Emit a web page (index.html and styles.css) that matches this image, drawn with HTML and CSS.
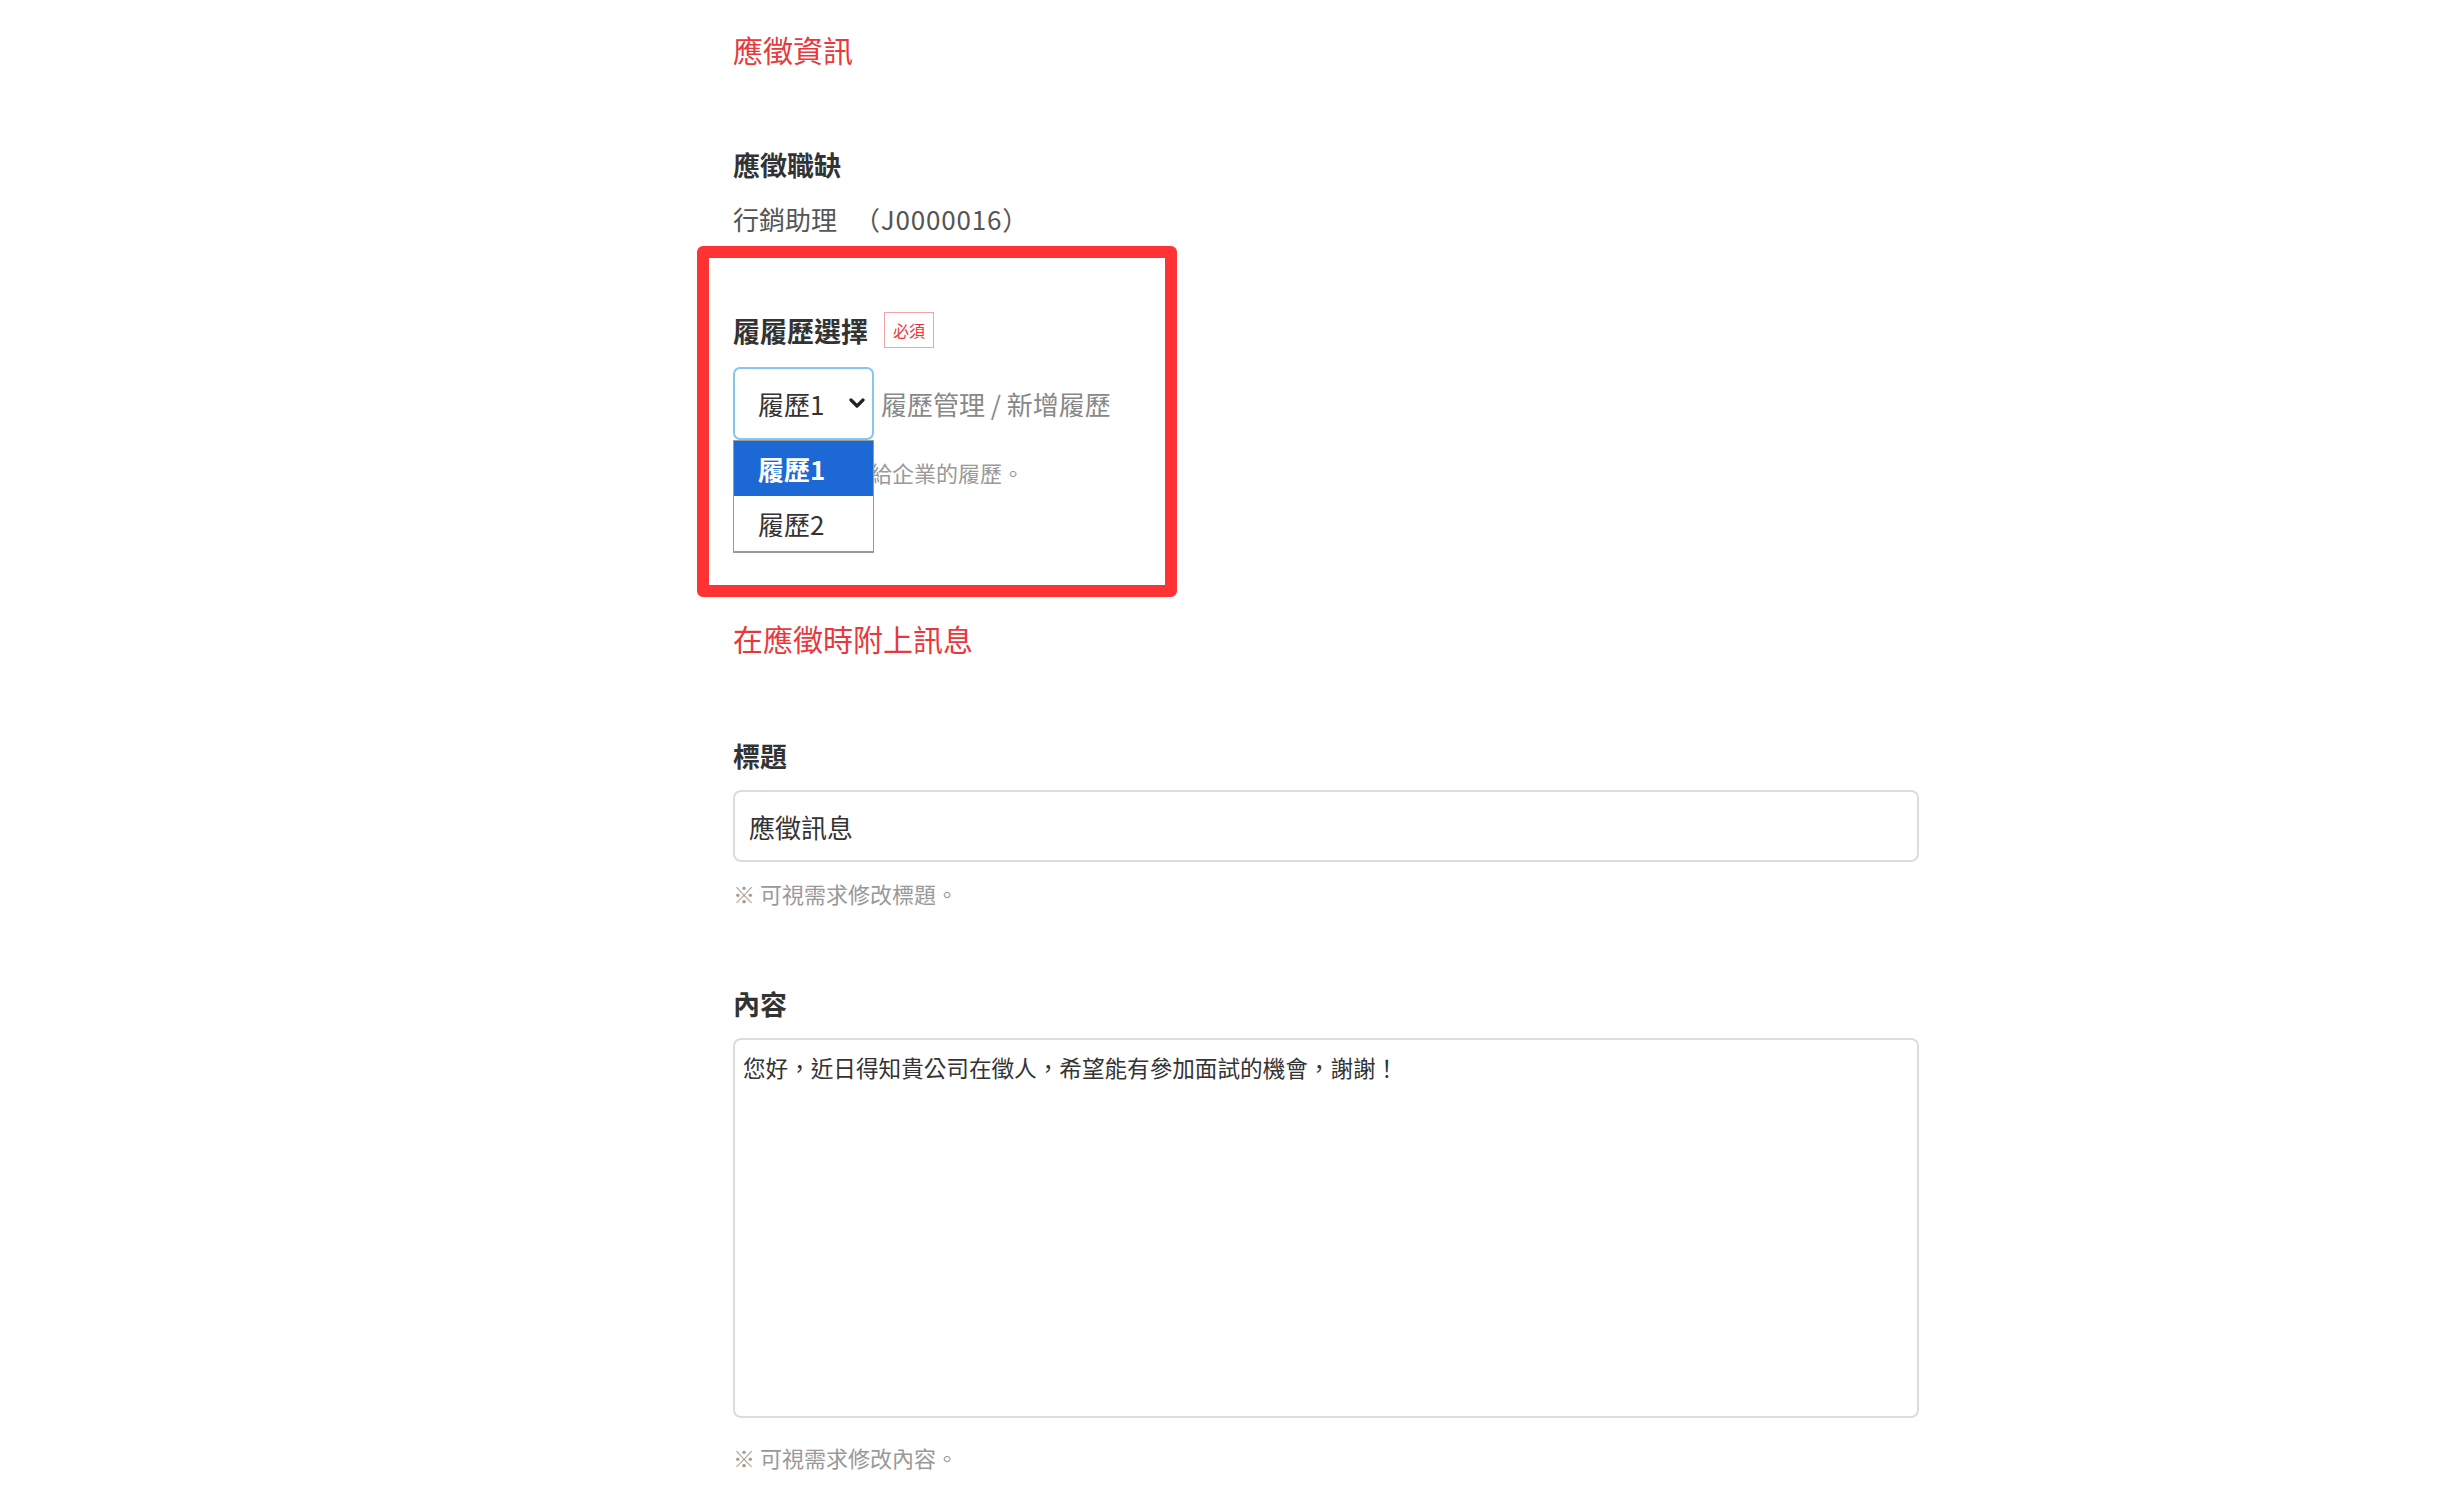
FILE: index.html
```html
<!DOCTYPE html>
<html lang="zh-Hant">
<head>
  <meta charset="UTF-8" />
  <meta name="viewport" content="width=device-width, initial-scale=1.0" />
  <title>應徵資訊</title>
  <link rel="stylesheet" href="styles.css">
</head>
<body>
  <div class="page">
    <h3 class="section-title">應徵資訊</h3>

    <div class="field">
      <div class="field-label">應徵職缺</div>
      <div class="field-value">行銷助理　<span class="job-code">（J0000016）</span></div>
    </div>

    <div class="field field-resume">
      <div class="field-label">履履歷選擇 <span class="badge">必須</span></div>
      <div class="select-row">
        <div class="select">
          <span>履歷1</span>
          <svg class="chevron" width="16" height="11" viewBox="0 0 16 11">
            <path d="M2 2 L8 8 L14 2" fill="none" stroke="#222" stroke-width="3.2" stroke-linecap="round" stroke-linejoin="round"/>
          </svg>
        </div>
        <span class="link">履歷管理 / 新增履歷</span>
        <ul class="options">
          <li class="selected">履歷1</li>
          <li>履歷2</li>
        </ul>
      </div>
      <p class="hint">※ 請選擇投遞給企業的履歷。</p>
      <div class="highlight"></div>
    </div>

    <h3 class="section-title second">在應徵時附上訊息</h3>

    <div class="field field-gap">
      <div class="field-label">標題</div>
      <input class="text-input" type="text" value="應徵訊息" />
      <p class="hint">※ 可視需求修改標題。</p>
    </div>

    <div class="field field-gap">
      <div class="field-label">內容</div>
      <textarea class="text-area">您好，近日得知貴公司在徵人，希望能有參加面試的機會，謝謝！</textarea>
      <p class="hint hint-last">※ 可視需求修改內容。</p>
    </div>
  </div>
</body>
</html>
```

FILE: styles.css
```css
body {
  margin: 0;
  background: #fff;
  color: #333;
  font-family: "Noto Sans CJK TC", "Noto Sans", sans-serif;
}

.page {
  width: 1186px;
  margin-left: 733px;
  padding-top: 27px;
}

.section-title {
  margin: 0;
  font-size: 30px;
  line-height: 45px;
  font-weight: normal;
  color: #e8383d;
}

.section-title.second {
  margin-top: 128px;
}

.field {
  margin-top: 72px;
}

.field-gap {
  margin-top: 74px;
}

.field-label {
  display: flex;
  align-items: center;
  height: 40px;
  font-size: 27px;
  font-weight: bold;
  color: #333;
  margin-bottom: 15px;
}

.field-value {
  font-size: 26px;
  line-height: 40px;
  color: #555;
}

.job-code {
  letter-spacing: 0.8px;
  margin-left: 4px;
}

.badge {
  margin-left: 16px;
  width: 48px;
  height: 34px;
  border: 1px solid #f2a3a5;
  color: #e8383d;
  font-size: 16px;
  font-weight: normal;
  display: flex;
  align-items: center;
  justify-content: center;
}

.field-resume {
  position: relative;
  margin-top: 71px;
}

.field-resume .field-label {
  margin-bottom: 17px;
}

.select-row {
  position: relative;
  display: flex;
  align-items: center;
}

.select {
  box-sizing: border-box;
  width: 141px;
  height: 73px;
  border: 2px solid #86c6ea;
  border-radius: 7px;
  padding: 0 7px 0 23px;
  display: flex;
  align-items: center;
  justify-content: space-between;
  font-size: 26px;
  color: #333;
}

.link {
  margin-left: 7px;
  font-size: 26px;
  color: #888;
}

.options {
  position: absolute;
  top: 73px;
  left: 0;
  width: 141px;
  box-sizing: border-box;
  margin: 0;
  padding: 0;
  list-style: none;
  background: #fff;
  border: 1px solid #999;
  border-bottom-width: 2px;
}

.options li {
  height: 55px;
  line-height: 55px;
  padding-left: 24px;
  font-size: 26px;
  color: #333;
}

.options li.selected {
  background: #1c68d4;
  color: #fff;
  font-weight: bold;
}

.hint {
  margin: 15px 0 0;
  font-size: 22px;
  line-height: 32px;
  color: #999;
}

.field-resume .hint {
  margin-top: 16px;
}

.hint-last {
  margin-top: 23px;
}

.highlight {
  position: absolute;
  left: -36px;
  top: -64px;
  width: 480px;
  height: 351px;
  box-sizing: border-box;
  border: 12px solid #ff3333;
  border-radius: 6px;
  pointer-events: none;
}

.text-input,
.text-area {
  display: block;
  box-sizing: border-box;
  width: 100%;
  border: 2px solid #dcdcdc;
  border-radius: 8px;
  font-family: inherit;
  color: #333;
  outline: none;
}

.text-input {
  height: 72px;
  padding: 0 14px;
  font-size: 26px;
}

.text-area {
  height: 380px;
  padding: 12px 8px;
  font-size: 22.6px;
  line-height: 32px;
  resize: none;
}
```
